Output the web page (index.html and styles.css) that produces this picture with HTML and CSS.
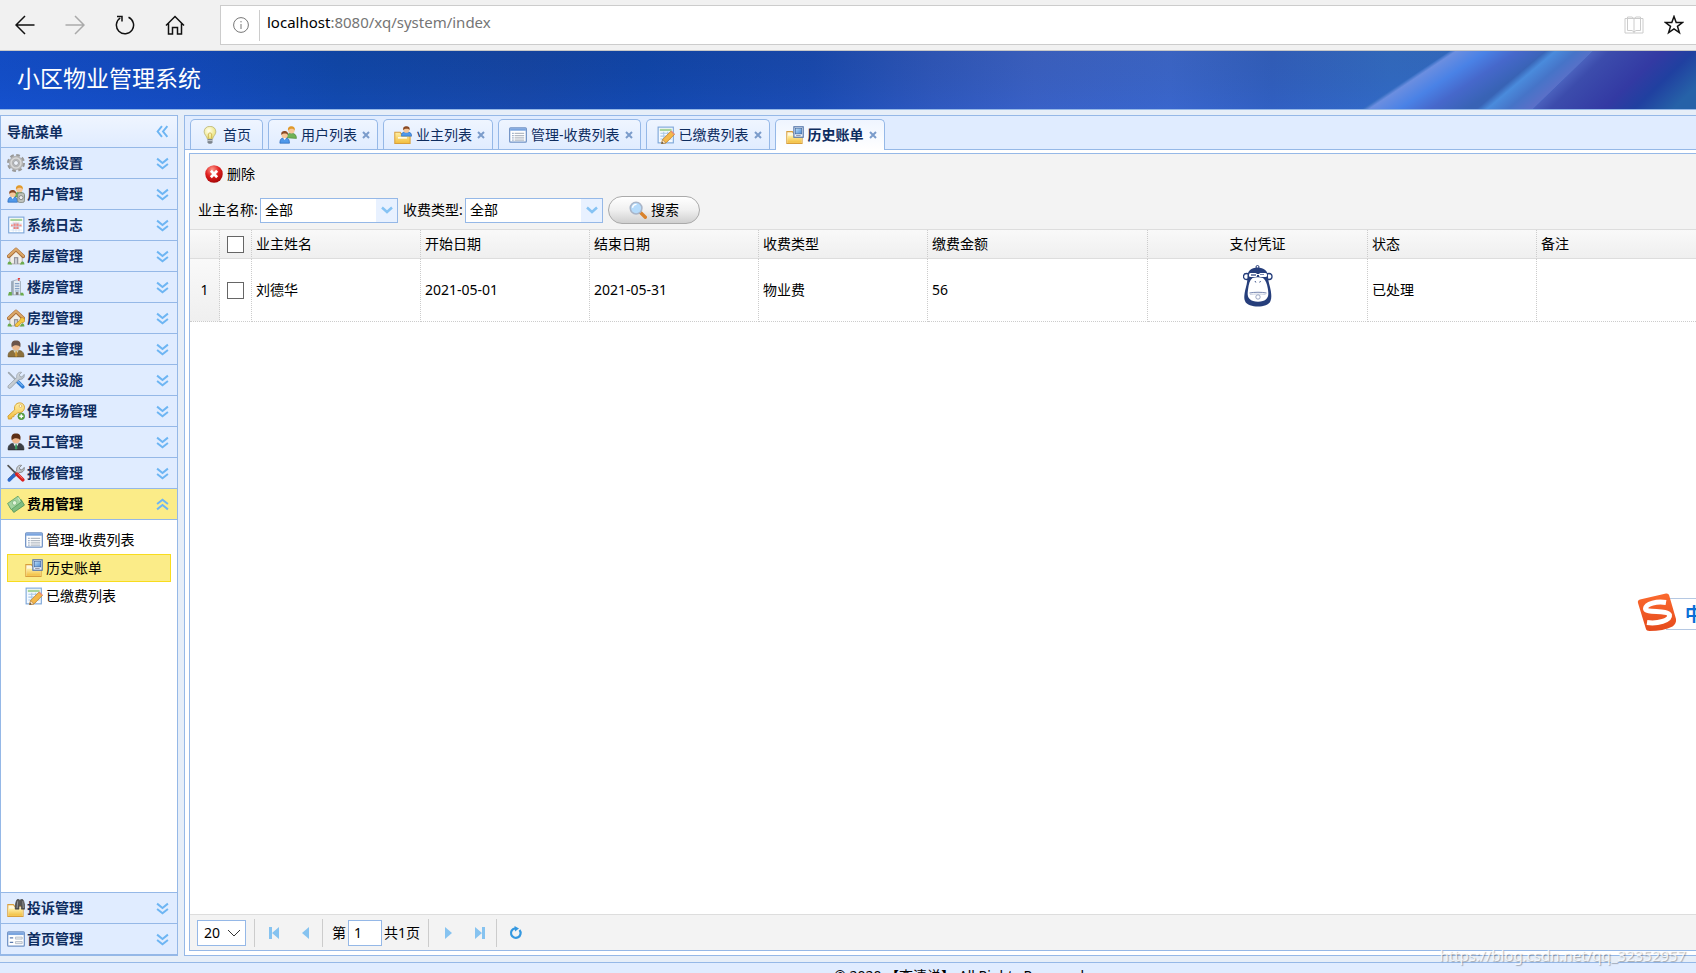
FILE: index.html
```html
<!DOCTYPE html>
<html lang="zh-CN">
<head>
<meta charset="utf-8">
<title>小区物业管理系统</title>
<link rel="stylesheet" href="styles.css">
</head>
<body>
<svg class="defs" aria-hidden="true">
  <defs>
    <linearGradient id="gold" x1="0" y1="0" x2="0" y2="1"><stop offset="0" stop-color="#fff0a8"/><stop offset="1" stop-color="#f2bd3c"/></linearGradient>
    <linearGradient id="steel" x1="0" y1="0" x2="1" y2="1"><stop offset="0" stop-color="#f2f5f7"/><stop offset="1" stop-color="#9aa4ad"/></linearGradient>
    <linearGradient id="bluescreen" x1="0" y1="0" x2="1" y2="1"><stop offset="0" stop-color="#bfe0fa"/><stop offset="1" stop-color="#4b8ad0"/></linearGradient>
    <radialGradient id="redball" cx=".4" cy=".25" r=".8"><stop offset="0" stop-color="#ff9a8c"/><stop offset=".5" stop-color="#e01f1f"/><stop offset="1" stop-color="#a00505"/></radialGradient>
    <radialGradient id="glow" cx=".4" cy=".35" r=".7"><stop offset="0" stop-color="#fffff0"/><stop offset="1" stop-color="#e9df6a"/></radialGradient>

    <symbol id="i-chev" viewBox="0 0 12 12"><path d="M1 1.500l5 4 5-4M1 6.500l5 4 5-4" fill="none" stroke="#6db5f3" stroke-width="1.800"/></symbol>
    <symbol id="i-down" viewBox="0 0 12 8"><path d="M1 1.500l5 4.500 5-4.500" fill="none" stroke="#86c3f4" stroke-width="2.500"/></symbol>

    <symbol id="i-gear" viewBox="0 0 16 16">
      <circle cx="8" cy="8" r="6.500" fill="none" stroke="#9a9a9a" stroke-width="3" stroke-dasharray="3.100 2"/>
      <circle cx="8" cy="8" r="4.400" fill="none" stroke="#b4b4b4" stroke-width="4"/>
      <circle cx="8" cy="8" r="4.400" fill="none" stroke="#d8d8d8" stroke-width="1.400"/>
      <circle cx="8" cy="8" r="2.200" fill="#eef3fb" stroke="#8d8d8d" stroke-width=".7"/>
    </symbol>
    <symbol id="i-users" viewBox="0 0 16 16">
      <path d="M7 10.500c0-3 1-4 4-4s4.500 1.500 4.500 4.500z" fill="#6fb256" stroke="#4c8a3a" stroke-width=".6"/>
      <circle cx="11" cy="3.800" r="2.900" fill="#f6c79a"/><path d="M8 4C7.600 1.200 9.200.3 11 .3s3.500 1 3 3.700c-1-1.800-4-2.200-6 0z" fill="#e0992a"/>
      <path d="M.8 15.300c0-3.600 1.200-4.800 4.200-4.800s4.300 1.200 4.300 4.800z" fill="#4f98ea" stroke="#2766b8" stroke-width=".6"/>
      <path d="M3.800 10.600L5 12.500l1.300-1.900z" fill="#fff"/>
      <circle cx="5" cy="8" r="2.800" fill="#f6c79a"/><path d="M2.100 8C1.700 5.300 3.200 4.500 5 4.500S8.400 5.500 8 8C6.600 6.500 4 6.200 2.100 8z" fill="#8a4a25"/>
    </symbol>
    <symbol id="i-useradmin" viewBox="0 0 16 16">
      <use href="#i-users"/>
      <rect x="9.500" y="7" width="6" height="8.500" rx="1.500" fill="#bfc3bd" stroke="#7c827a" stroke-width=".7"/>
      <circle cx="12.500" cy="11.200" r="1.800" fill="#eee" stroke="#777" stroke-width=".7"/>
    </symbol>
    <symbol id="i-log" viewBox="0 0 16 16">
      <rect x="1.500" y="1" width="13.500" height="14" fill="#fff" stroke="#7da7d9"/>
      <rect x="3" y="2.500" width="10.500" height="2" fill="#a8d49b"/>
      <path d="M5.500 6h5v5.500h-5z" fill="#ee7b72"/><path d="M3.500 7.500h9.500v2H3.500z" fill="#f08f87"/>
      <path d="M3 6.500h10.500M3 9.500h10.500M3 12.500h10.500M5.500 5v9M8 5v9M10.700 5v9" stroke="#c9dcf1" stroke-width=".6"/>
    </symbol>
    <symbol id="i-house" viewBox="0 0 16 16">
      <path d="M2.500 7L8 2.500 13.500 7v8h-11z" fill="#f0eee8" stroke="#9a938a" stroke-width=".6"/>
      <rect x="6.200" y="9" width="3.800" height="6" fill="#8d8d95"/><rect x="7" y="10" width="2" height="5" fill="#c9ccd4"/>
      <path d="M1.500 8.300L8 2.200l6.500 6.100" fill="none" stroke="#a86b36" stroke-width="3.200" stroke-linecap="round" stroke-linejoin="round"/>
      <path d="M1.500 8L8 2l6.500 6" fill="none" stroke="#dba868" stroke-width="1.900" stroke-linecap="round"/>
      <path d="M.5 15.500c0-2.500 1.500-3.500 3-2l1 2zM15.500 15.500c0-2.500-1.500-3.500-3-2l-1 2z" fill="#6bac4c"/>
    </symbol>
    <symbol id="i-building" viewBox="0 0 16 16">
      <path d="M4 3l5-1.500 3 1.500v12H4z" fill="#e4ebf2" stroke="#8a98a8" stroke-width=".6"/><path d="M4 3l2-.6V15H4z" fill="#9aa9ba"/>
      <path d="M7 5h4M7 7.200h4M7 9.400h4M7 11.600h4" stroke="#84a0c4" stroke-width="1"/>
      <path d="M10.500 2.500V.2M9.600.5h2" stroke="#e03f3f" stroke-width="1"/><rect x="7.800" y="12.500" width="2.400" height="2.500" fill="#777"/>
      <path d="M.8 15.500l1-3h2.500v3zM12 15.500v-2.500h2.300l.9 2.500z" fill="#6bac4c"/>
    </symbol>
    <symbol id="i-housekey" viewBox="0 0 16 16"><use href="#i-house"/><path d="M7.500 13.500l4-3.500c-.3-3 4.300-3 4.300-.2 0 2-1.500 2.500-2.800 2.200l-3.300 3.500H7.500z" fill="#f6c942" stroke="#c08a1a" stroke-width=".6"/></symbol>
    <symbol id="i-owner" viewBox="0 0 16 16">
      <path d="M1 15c-.3-4.500 2-6 7-6s7.300 1.500 7 6z" fill="#8d713c" stroke="#6a5226" stroke-width=".6"/>
      <path d="M5.500 9L8 13l2.500-4z" fill="#d9dcc8"/><path d="M7.500 10h1.200l.6 4-1.200 1-1-1z" fill="#c79331"/>
      <circle cx="8" cy="5.500" r="3.600" fill="#edbb91"/><path d="M4.200 6.500C3.200 2 5 .5 8 .5s4.800 1.500 3.800 6C10.800 4.200 6 4 4.200 6.500z" fill="#6b554b"/>
    </symbol>
    <symbol id="i-staff" viewBox="0 0 16 16">
      <path d="M1 15c-.3-4.500 2-6 7-6s7.300 1.500 7 6z" fill="#3c3f45" stroke="#26282c" stroke-width=".6"/>
      <path d="M5.500 9L8 13.500 10.500 9z" fill="#f4f6f8"/><path d="M7.500 10h1.200l.5 3.500L8 15l-1-1.500z" fill="#39975c"/>
      <circle cx="8" cy="5.500" r="3.600" fill="#f0b88c"/><path d="M4.200 6.500C3.200 2 5 .5 8 .5s4.800 1.500 3.800 6C10.800 4.200 6 4 4.200 6.500z" fill="#5c2f16"/>
    </symbol>
    <symbol id="i-tools" viewBox="0 0 16 16">
      <path d="M1.500 1.500l7 7" stroke="#9fa9b2" stroke-width="1.600" stroke-linecap="round"/>
      <path d="M9 9l5 5" stroke="#2f7ed8" stroke-width="3.200" stroke-linecap="round"/><path d="M9.300 8.700l4.500 4.500" stroke="#7fb9f3" stroke-width="1"/>
      <path d="M1 13.200l7.700-7.400C8 2.700 10.500.5 13 1.200L11 3.300l.5 1.600 1.700.4L15.300 3c.7 2.700-1.800 5-4.500 4.500L3.200 15.200c-1.400.9-3-.5-2.200-2z" fill="url(#steel)" stroke="#8a949d" stroke-width=".6"/>
    </symbol>
    <symbol id="i-repair" viewBox="0 0 16 16">
      <path d="M1 13.200l7.700-7.400C8 2.700 10.500.5 13 1.200L11 3.300l.5 1.600 1.700.4L15.300 3c.7 2.700-1.800 5-4.500 4.500L6.500 11.800z" fill="url(#steel)" stroke="#777" stroke-width=".7"/>
      <path d="M2 14.200L6.500 9.800" stroke="#2c68c9" stroke-width="3" stroke-linecap="round"/>
      <path d="M1 1.500l7 7" stroke="#555" stroke-width="1.500" stroke-linecap="round"/>
      <path d="M8.800 9l5.200 5" stroke="#d92020" stroke-width="3.200" stroke-linecap="round"/><path d="M9.500 8.800l4.300 4.200" stroke="#ff8b80" stroke-width=".8"/>
    </symbol>
    <symbol id="i-keyadd" viewBox="0 0 16 16">
      <path d="M.8 12.500l6-5.500C6 2.500 9 .5 12 .8c3.500.5 4.500 4.500 2.500 7-1.400 1.700-3.500 2-5 1.700L8 11l-1.500.3-.3 1.700-1.700.2-.5 1.800-2.700.2z" fill="url(#gold)" stroke="#d39c2b" stroke-width=".8"/>
      <circle cx="12" cy="3.600" r="1.200" fill="#fff" stroke="#c8952c" stroke-width=".5"/>
      <circle cx="12.700" cy="12.700" r="3" fill="#5aa544" stroke="#3f7f2e" stroke-width=".5"/><path d="M12.700 10.900v3.600M10.900 12.700h3.600" stroke="#fff" stroke-width="1.200"/>
    </symbol>
    <symbol id="i-money" viewBox="0 0 16 16">
      <path d="M2.500 10.500L12.500 4l3 5-9.500 6.500z" fill="#7fbd81" stroke="#4b8f55" stroke-width=".7"/>
      <path d="M.5 7.500L9.800 1l3.200 5-9.300 7z" fill="#a3d3a0" stroke="#549a5c" stroke-width=".7"/>
      <circle cx="6.700" cy="7" r="2" fill="#e2f3dc" stroke="#6fae70" stroke-width=".6"/><path d="M10 2.500l1.500 2.500" stroke="#cfeac9" stroke-width="1"/>
    </symbol>
    <symbol id="i-list" viewBox="0 0 16 16">
      <rect x=".6" y="1.600" width="14.800" height="12.800" rx=".8" fill="#fff" stroke="#6f91c5" stroke-width="1.100"/>
      <path d="M1 2h14v2.200H1z" fill="#7ba5df"/><path d="M3 6.500h1M3 8.500h1M3 10.500h1M3 12.500h1" stroke="#6f88ad"/><path d="M5 6.500h8.500M5 8.500h8.500M5 10.500h8.500M5 12.500h8.500" stroke="#b3bac4"/>
    </symbol>
    <symbol id="i-form" viewBox="0 0 16 16">
      <rect x=".6" y="1.600" width="14.800" height="12.800" rx=".8" fill="#fff" stroke="#6f91c5" stroke-width="1.100"/>
      <path d="M1 2h14v2.500H1z" fill="#7ba5df"/><path d="M2.500 7h3M2.500 11h3" stroke="#5c7cb0" stroke-width="1"/><path d="M7.500 6.300h6v1.800h-6zM7.500 10.300h6v1.800h-6z" fill="#eee" stroke="#a9b4c2" stroke-width=".7"/>
    </symbol>
    <symbol id="i-folder" viewBox="0 0 16 16"><path d="M.7 5h5l1 1.500h7.600v9H.7z" fill="#fff8dd" stroke="#d99f3c" stroke-width=".9"/><path d="M1.200 8.500h12.600V15H1.200z" fill="url(#gold)"/></symbol>
    <symbol id="i-history" viewBox="0 0 16 16">
      <use href="#i-folder"/><rect x="7" y=".7" width="8.300" height="9.300" fill="#eef4fb" stroke="#5073a8"/><rect x="8.300" y="2" width="5.700" height="5" fill="url(#bluescreen)" stroke="#41679f" stroke-width=".6"/><path d="M9 8.500h4" stroke="#889" stroke-width=".8"/>
    </symbol>
    <symbol id="i-complain" viewBox="0 0 16 16">
      <use href="#i-folder"/><path d="M7.300 9c-.3-3 .5-7 1.700-8.500h1.800l.7 1 .7-1H14C15.300 2 16 6 15.700 9h-3V6h-2v3z" fill="#555" stroke="#333" stroke-width=".5"/><path d="M9.500 2L9 8M14 2l.5 6" stroke="#a5a5a5" stroke-width=".7"/>
    </symbol>
    <symbol id="i-userfolder" viewBox="0 0 16 16">
      <path d="M.7 5.500h4.800l1 1.500h7.800v8.500H.7z" fill="url(#gold)" stroke="#d99f3c" stroke-width=".9"/>
      <path d="M6.500 9c0-2.700 1.200-3.800 4.500-3.800s4.700 1.100 4.700 3.800z" fill="#4f98ea" stroke="#2766b8" stroke-width=".5"/>
      <circle cx="11" cy="3.500" r="2.600" fill="#f6c79a"/><path d="M8.200 3.700C7.800 1 9.200.2 11 .2s3.300.8 2.900 3.500c-1-1.500-4-1.700-5.700 0z" fill="#8a4a25"/>
      <path d="M3.500 10.500h8" stroke="#fffbe6" stroke-width="1.500"/>
    </symbol>
    <symbol id="i-edit" viewBox="0 0 16 16">
      <rect x="1" y="1" width="13.500" height="14" fill="#f5faff" stroke="#7da7d9"/><rect x="2.500" y="2.500" width="10.500" height="2" fill="#a8d49b"/>
      <path d="M3 6.500h10M3 9h10M3 11.500h10M6 5v9M9.500 5v9" stroke="#a9c8e8" stroke-width=".9"/>
      <path d="M4 15.800l1-3.800 7.500-7.500 3 3L8 15z" fill="#f5b84b" stroke="#b87820" stroke-width=".6"/><path d="M4 15.800l1-3.800 3 3z" fill="#f7e0bd" stroke="#a87838" stroke-width=".5"/><path d="M4 15.800l.5-1.800 1.300 1.300z" fill="#444"/><path d="M12.500 4.500l3 3" stroke="#e68a7a" stroke-width="1.200"/>
    </symbol>
    <symbol id="i-bulb" viewBox="0 0 16 16">
      <path d="M8 .3c3.200 0 5.200 2 5.200 4.900 0 2.500-2.400 3.800-2.900 6.300H5.700C5.200 9 2.800 7.700 2.800 5.200 2.800 2.300 4.800.3 8 .3z" fill="url(#glow)" stroke="#b9b476" stroke-width=".7"/>
      <path d="M6.500 11V7l1.500-1 1.500 1v4" fill="none" stroke="#c9a93c" stroke-width=".7"/><path d="M5.800 11.500h4.400v3l-1 1.200H6.800l-1-1.200z" fill="#7c848c"/><path d="M5.800 13h4.400" stroke="#dde1e5" stroke-width=".7"/>
    </symbol>
    <symbol id="i-delete" viewBox="0 0 16 16"><circle cx="8" cy="8" r="7.800" fill="url(#redball)"/><path d="M5.200 5.200l5.600 5.600M10.800 5.200l-5.600 5.600" stroke="#fff" stroke-width="2.500"/></symbol>
    <symbol id="i-search" viewBox="0 0 16 16"><path d="M10 10l4.500 4.500" stroke="#d9822b" stroke-width="3" stroke-linecap="round"/><circle cx="6.300" cy="6.300" r="5.200" fill="#b5dbfb" stroke="#a9b5c8" stroke-width="1.400"/><path d="M3.200 6c.2-2 1.500-3 3.500-3" fill="none" stroke="#fff" stroke-width="1.300"/></symbol>
  </defs>
</svg>

<div class="browser">
  <button class="nav-btn" aria-label="后退"><svg width="20" height="20" viewBox="0 0 20 20"><path d="M19.500 10H1.500M10 1L1 10l9 9"/></svg></button>
  <button class="nav-btn nav-off" aria-label="前进"><svg width="20" height="20" viewBox="0 0 20 20"><path d="M.5 10h18M10 1l9 9-9 9"/></svg></button>
  <button class="nav-btn" aria-label="刷新"><svg width="20" height="20" viewBox="0 0 20 20"><path d="M13.500 2.300A8.600 8.600 0 1 1 5.200 3M2 1.500h5v5"/></svg></button>
  <button class="nav-btn" aria-label="主页"><svg width="20" height="20" viewBox="0 0 20 20"><path d="M1 10.500l9-9 9 9M3.500 8.500V19h4v-6.500h5V19h4V8.500"/></svg></button>
  <div class="address">
    <svg class="info" width="16" height="16" viewBox="0 0 16 16"><circle cx="8" cy="8" r="7.400"/><path d="M8 7v5M8 4v1.400"/></svg>
    <div class="url"><span class="host">localhost</span>:8080/xq/system/index</div>
    <svg class="book" width="20" height="18" viewBox="0 0 20 18"><path d="M10 2.500H1v14.500h18V2.500zM10 2.500V17M3.500 2.500V1H8l2 1.500L12 1h4.500v13.500H12L10 16l-2-1.500H3.500V2.500"/></svg>
    <svg class="star" width="20" height="20" viewBox="0 0 20 20"><path d="M10 1.500l2.200 6h6.300l-5 3.900 1.900 6.300-5.400-3.800-5.400 3.800 1.900-6.300-5-3.900h6.300z"/></svg>
  </div>
</div>

<header class="banner">
  <svg class="banner-art" viewBox="0 0 1696 58" preserveAspectRatio="none" aria-hidden="true">
    <defs>
      <linearGradient id="sky"><stop offset="0" stop-color="#134ec9"/><stop offset=".1" stop-color="#1349bb"/><stop offset=".2" stop-color="#1046a5"/><stop offset=".31" stop-color="#16449f"/><stop offset=".38" stop-color="#1145a6"/><stop offset=".48" stop-color="#1b49ab"/><stop offset=".55" stop-color="#3257b6"/><stop offset=".61" stop-color="#3f62c0"/><stop offset=".69" stop-color="#4068c7"/><stop offset=".75" stop-color="#3560ba"/><stop offset=".82" stop-color="#366dbf"/><stop offset="1" stop-color="#3668bd"/></linearGradient>
      <linearGradient id="shade" x1="0" y1="0" x2="0" y2="1"><stop offset="0" stop-color="#0c3888" stop-opacity=".1"/><stop offset="1" stop-color="#1f5ee6" stop-opacity=".2"/></linearGradient>
      <linearGradient id="ray1" gradientUnits="userSpaceOnUse" x1="1450" y1="0" x2="1482" y2="48"><stop offset="0" stop-color="#366dc2"/><stop offset=".06" stop-color="#6b8ee0"/><stop offset=".35" stop-color="#4a82e6"/><stop offset=".65" stop-color="#4668cb"/><stop offset="1" stop-color="#3863b5"/></linearGradient>
      <linearGradient id="ray2" gradientUnits="userSpaceOnUse" x1="1545" y1="0" x2="1567" y2="26"><stop offset="0" stop-color="#3863b5"/><stop offset=".2" stop-color="#4a8bdc"/><stop offset=".6" stop-color="#4674c8"/><stop offset="1" stop-color="#5a70c8"/></linearGradient>
      <linearGradient id="ray3" gradientUnits="userSpaceOnUse" x1="1593" y1="0" x2="1661" y2="70"><stop offset="0" stop-color="#4a60bc"/><stop offset=".12" stop-color="#3c4cac"/><stop offset=".5" stop-color="#333aa3"/><stop offset=".72" stop-color="#2040a0"/><stop offset="1" stop-color="#2662a8"/></linearGradient>
    </defs>
    <path fill="url(#sky)" d="M0 0h1696v58H0z"/><path fill="url(#shade)" d="M0 0h1696v58H0z"/>
    <path fill="url(#ray1)" d="M1450 0h100l-70 58h-118z"/>
    <path fill="url(#ray2)" d="M1545 0h48l-60 58h-57z"/>
    <path fill="url(#ray3)" d="M1593 0h103v58h-163z"/>
  </svg>
  <h1 class="title">小区物业管理系统</h1>
</header>

<div class="layout">
  <nav class="side">
    <div class="side-title">导航菜单<button class="fold" aria-label="收起"><svg class="chev chev-left"><use href="#i-chev"/></svg></button></div>
    <button class="acc"><svg class="ico"><use href="#i-gear"/></svg>系统设置<svg class="chev"><use href="#i-chev"/></svg></button>
    <button class="acc"><svg class="ico"><use href="#i-useradmin"/></svg>用户管理<svg class="chev"><use href="#i-chev"/></svg></button>
    <button class="acc"><svg class="ico"><use href="#i-log"/></svg>系统日志<svg class="chev"><use href="#i-chev"/></svg></button>
    <button class="acc"><svg class="ico"><use href="#i-house"/></svg>房屋管理<svg class="chev"><use href="#i-chev"/></svg></button>
    <button class="acc"><svg class="ico"><use href="#i-building"/></svg>楼房管理<svg class="chev"><use href="#i-chev"/></svg></button>
    <button class="acc"><svg class="ico"><use href="#i-housekey"/></svg>房型管理<svg class="chev"><use href="#i-chev"/></svg></button>
    <button class="acc"><svg class="ico"><use href="#i-owner"/></svg>业主管理<svg class="chev"><use href="#i-chev"/></svg></button>
    <button class="acc"><svg class="ico"><use href="#i-tools"/></svg>公共设施<svg class="chev"><use href="#i-chev"/></svg></button>
    <button class="acc"><svg class="ico"><use href="#i-keyadd"/></svg>停车场管理<svg class="chev"><use href="#i-chev"/></svg></button>
    <button class="acc"><svg class="ico"><use href="#i-staff"/></svg>员工管理<svg class="chev"><use href="#i-chev"/></svg></button>
    <button class="acc"><svg class="ico"><use href="#i-repair"/></svg>报修管理<svg class="chev"><use href="#i-chev"/></svg></button>
    <button class="acc acc-on" aria-expanded="true"><svg class="ico"><use href="#i-money"/></svg>费用管理<svg class="chev chev-up"><use href="#i-chev"/></svg></button>
    <div class="tree">
      <a class="leaf" href="#"><svg class="ico"><use href="#i-list"/></svg>管理-收费列表</a>
      <a class="leaf leaf-on" href="#"><svg class="ico"><use href="#i-history"/></svg>历史账单</a>
      <a class="leaf" href="#"><svg class="ico"><use href="#i-edit"/></svg>已缴费列表</a>
    </div>
    <button class="acc"><svg class="ico"><use href="#i-complain"/></svg>投诉管理<svg class="chev"><use href="#i-chev"/></svg></button>
    <button class="acc"><svg class="ico"><use href="#i-form"/></svg>首页管理<svg class="chev"><use href="#i-chev"/></svg></button>
  </nav>

  <main class="main">
    <div class="tabs">
      <div class="tab"><a href="#"><svg class="ico"><use href="#i-bulb"/></svg>首页</a></div>
      <div class="tab"><a href="#"><svg class="ico"><use href="#i-users"/></svg>用户列表</a><button class="close" aria-label="关闭"><svg width="8" height="8" viewBox="0 0 8 8"><path d="M1 1l6 6M7 1L1 7"/></svg></button></div>
      <div class="tab"><a href="#"><svg class="ico"><use href="#i-userfolder"/></svg>业主列表</a><button class="close" aria-label="关闭"><svg width="8" height="8" viewBox="0 0 8 8"><path d="M1 1l6 6M7 1L1 7"/></svg></button></div>
      <div class="tab"><a href="#"><svg class="ico"><use href="#i-list"/></svg>管理-收费列表</a><button class="close" aria-label="关闭"><svg width="8" height="8" viewBox="0 0 8 8"><path d="M1 1l6 6M7 1L1 7"/></svg></button></div>
      <div class="tab"><a href="#"><svg class="ico"><use href="#i-edit"/></svg>已缴费列表</a><button class="close" aria-label="关闭"><svg width="8" height="8" viewBox="0 0 8 8"><path d="M1 1l6 6M7 1L1 7"/></svg></button></div>
      <div class="tab tab-on"><a href="#"><svg class="ico"><use href="#i-history"/></svg>历史账单</a><button class="close" aria-label="关闭"><svg width="8" height="8" viewBox="0 0 8 8"><path d="M1 1l6 6M7 1L1 7"/></svg></button></div>
    </div>
    <section class="panel">
      <div class="toolbar">
        <button class="tool"><svg class="ico"><use href="#i-delete"/></svg>删除</button>
        <form class="filters">
          <label for="owner">业主名称:</label>
          <div class="combo"><select id="owner"><option>全部</option></select><span class="arrow"><svg width="12" height="8"><use href="#i-down"/></svg></span></div>
          <label for="kind">收费类型:</label>
          <div class="combo"><select id="kind"><option>全部</option></select><span class="arrow"><svg width="12" height="8"><use href="#i-down"/></svg></span></div>
          <button class="search" type="button"><svg class="ico"><use href="#i-search"/></svg>搜索</button>
        </form>
      </div>
      <div class="grid">
        <table>
          <colgroup><col class="c-num"><col class="c-check"><col class="c-mid"><col class="c-mid"><col class="c-mid"><col class="c-mid"><col class="c-wide"><col class="c-wide"><col class="c-mid"><col></colgroup>
          <thead>
            <tr><th></th><th class="box"><input type="checkbox" aria-label="全选"></th><th>业主姓名</th><th>开始日期</th><th>结束日期</th><th>收费类型</th><th>缴费金额</th><th class="center">支付凭证</th><th>状态</th><th>备注</th></tr>
          </thead>
          <tbody>
            <tr><td class="num">1</td><td class="box"><input type="checkbox" aria-label="选择第1行"></td><td>刘德华</td><td>2021-05-01</td><td>2021-05-31</td><td>物业费</td><td>56</td>
              <td class="center proof"><svg width="30" height="42" viewBox="0 0 30 42" role="img" aria-label="支付凭证">
                <circle cx="14.500" cy="2" r="1.500" fill="none" stroke="#263e7b"/>
                <circle cx="3.500" cy="11.500" r="3" fill="#fff" stroke="#263e7b" stroke-width="1.300"/><circle cx="26" cy="11.500" r="3" fill="#fff" stroke="#263e7b" stroke-width="1.300"/>
                <path d="M14.500 2.500c6.500 0 10.500 4 10.500 8.500 0 4 1 7 2 11 1.200 5 2 10.500.5 14-1.500 4-7 5.500-12.500 5.500S3.500 40 2 36c-1.500-3.500-.2-9.500 1-14 1-4 1.500-7 1.500-11 0-4.500 3.500-8.500 10-8.500z" fill="#263e7b"/>
                <path d="M9.500 13c3-1 7.500-1 10.500 0 3 2.500 4 6 4.800 10.500.8 5 1 8-1.500 10.500-1.500 1.700-4.800 2.800-8.300 2.800s-6.800-1.100-8.300-2.800c-2.500-2.500-2.200-6-1.500-10.500.7-4.500 1.300-8 4.300-10.500z" fill="#fff"/>
                <rect x="6" y="8" width="8" height="4" rx="1.500" fill="#fff"/><rect x="16" y="8" width="8" height="4" rx="1.500" fill="#fff"/><rect x="8" y="9" width="5" height="2" fill="#7d8bb0"/><rect x="17" y="9" width="4" height="1" fill="#7d8bb0"/><path d="M13 9.500h4" stroke="#fff"/>
                <path d="M12 16l.8 1.500M17.500 16l-.8 1.500" stroke="#263e7b" stroke-width=".9"/>
                <path d="M6.500 28c5-1 12-1 17 0" fill="none" stroke="#56689a" stroke-width=".8"/><path d="M7 29.500c5-.6 10-.6 15.500 0" fill="none" stroke="#aab4cc" stroke-width=".6"/>
                <circle cx="15" cy="32" r="2.200" fill="none" stroke="#8592b5" stroke-width=".8"/>
              </svg></td><td>已处理</td><td></td></tr>
          </tbody>
        </table>
      </div>
      <div class="pager">
        <div class="page-size"><select aria-label="每页条数"><option>20</option></select><svg width="14" height="8" viewBox="0 0 14 8"><path d="M1 1l6 6 6-6"/></svg></div>
        <span class="sep"></span>
        <button class="pg" aria-label="首页"><svg width="12" height="12" viewBox="0 0 12 12"><path d="M1 0h3v12H1zM11 0v12L4 6z"/></svg></button>
        <button class="pg" aria-label="上一页"><svg width="12" height="12" viewBox="0 0 12 12"><path d="M9 0v12L2 6z"/></svg></button>
        <span class="sep"></span>
        <label class="jump" for="page">第</label><input id="page" class="page-no" type="text" value="1"><span class="total">共1页</span>
        <span class="sep"></span>
        <button class="pg" aria-label="下一页"><svg width="12" height="12" viewBox="0 0 12 12"><path d="M3 0v12l7-6z"/></svg></button>
        <button class="pg" aria-label="末页"><svg width="12" height="12" viewBox="0 0 12 12"><path d="M8 0h3v12H8zM1 0v12l7-6z"/></svg></button>
        <span class="sep"></span>
        <button class="pg" aria-label="刷新"><svg width="14" height="14" viewBox="0 0 14 14"><path d="M10.500 4a4.800 4.800 0 1 1-4.500-1.700" fill="none" stroke="#3498e0" stroke-width="2.200"/><path d="M5.500 0l4.500 2.500-4 3z" fill="#3498e0"/></svg></button>
      </div>
    </section>
  </main>
</div>
<footer class="foot">© 2020 【李清说】 All Rights Reserved.</footer>

<div class="ime">
  <div class="ime-bar">中</div>
  <svg class="ime-logo" width="42" height="40" viewBox="0 0 42 40" aria-hidden="true"><defs><linearGradient id="ime" x1="0" y1="0" x2="0" y2="1"><stop offset="0" stop-color="#fb6a2e"/><stop offset="1" stop-color="#e54a1c"/></linearGradient></defs><path d="M4 7.500L30 1.500c1.500-.3 2.800.4 3.200 2L40 27c.5 3-1 6-3.500 7.500-6 3-14 4.500-23 4.500-2 0-3.200-.7-3.700-2.500L2 11c-.5-1.800.3-3.100 2-3.500z" fill="url(#ime)"/><path d="M30 10.500C21 9 10 11.500 9.500 16.500 9 21.500 32 17.500 33.500 23c1 5.500-12 9-22.500 7.500" fill="none" stroke="#fff" stroke-width="5"/></svg>
</div>
<div class="mark">https://blog.csdn.net/qq_32352957</div>
</body>
</html>
```

FILE: styles.css
```css
* { box-sizing: border-box; }

body {
  margin: 0;
  height: 100vh;
  overflow: hidden;
  display: flex;
  flex-direction: column;
  position: relative;
  background: #e6eef8;
  color: #000;
  font: 14px/20px "Noto Sans", "Noto Sans CJK SC", sans-serif;
}

button, select, input { font: inherit; color: inherit; margin: 0; }
button { border: 0; padding: 0; background: none; }
a { color: inherit; text-decoration: none; }
svg { display: block; flex: none; }

.defs { position: absolute; width: 0; height: 0; }
.ico { width: 18px; height: 18px; }

/* browser bar */
.browser {
  flex: none;
  display: flex;
  align-items: center;
  height: 51px;
  padding-left: 15px;
  background: #f1f1f1;
  border-bottom: 1px solid #c8c8c8;
}
.nav-btn { width: 20px; margin-right: 30px; }
.nav-btn path { fill: none; stroke: #111; stroke-width: 1.5; }
.nav-off path { stroke: #aaa; }
.address {
  flex: 1;
  display: flex;
  align-items: center;
  height: 40px;
  margin-left: 5px;
  padding: 0 12px;
  background: #fff;
  border: 1px solid #ccc;
  border-right: 0;
}
.info { fill: none; stroke: #777; stroke-width: 1; margin-right: 10px; }
.url {
  flex: 1;
  height: 31px;
  padding-left: 7px;
  border-left: 1px solid #ccc;
  color: #757575;
  font-size: 15px;
  line-height: 24px;
}
.host { color: #000; }
.book { fill: none; stroke: #ccc; stroke-width: 1; margin-right: 20px; }
.star { fill: none; stroke: #111; stroke-width: 1.5; }

/* banner */
.banner {
  flex: none;
  position: relative;
  height: 59px;
  border-bottom: 1px solid #95b8e7;
}
.banner-art { position: absolute; inset: 0; width: 100%; height: 100%; }
.title {
  position: relative;
  margin: 0;
  padding-left: 17px;
  color: #fff;
  font-size: 23px;
  font-weight: 400;
  line-height: 54px;
}

.layout { flex: 1; min-height: 0; display: flex; gap: 6px; padding: 5px 0 6px; }

/* navigation */
.side {
  flex: none;
  width: 178px;
  display: flex;
  flex-direction: column;
  background: #fff;
  border: 1px solid #95b8e7;
}
.side-title {
  flex: none;
  display: flex;
  align-items: center;
  justify-content: space-between;
  height: 32px;
  padding: 0 8px 0 6px;
  background: linear-gradient(#eff5ff, #e0ecff);
  border-bottom: 1px solid #95b8e7;
  color: #0e2d5f;
  font-weight: 700;
}
.acc {
  flex: none;
  display: flex;
  align-items: center;
  height: 31px;
  padding: 0 8px 0 6px;
  background: #e0ecff;
  border-bottom: 1px solid #95b8e7;
  color: #0e2d5f;
  font-weight: 700;
}
.acc .ico { margin-right: 2px; }
.acc-on { background: #fbec88; color: #000; }
.chev { width: 13px; height: 13px; margin-left: auto; }
.chev-left { transform: rotate(90deg); }
.chev-up { transform: rotate(180deg); }
.tree { flex: 1; min-height: 0; padding: 6px; border-bottom: 1px solid #95b8e7; }
.leaf {
  display: flex;
  align-items: center;
  gap: 3px;
  height: 28px;
  padding-left: 17px;
  border: 1px solid transparent;
}
.leaf-on { background: #fbec88; border-color: #f8dc1e; }

/* tabs */
.main {
  flex: 1;
  min-width: 0;
  display: flex;
  flex-direction: column;
  background: #fff;
  border: 1px solid #95b8e7;
  border-right: 0;
}
.tabs {
  flex: none;
  display: flex;
  align-items: flex-end;
  gap: 5px;
  height: 34px;
  padding-left: 5px;
  background: #e0ecff;
  border-bottom: 1px solid #95b8e7;
}
.tab {
  display: flex;
  align-items: center;
  gap: 5px;
  height: 30px;
  padding: 0 7px 0 10px;
  background: linear-gradient(#eff5ff, #e0ecff);
  border: 1px solid #95b8e7;
  border-bottom: 0;
  border-radius: 5px 5px 0 0;
  color: #0e2d5f;
}
.tab:first-child { padding-right: 11px; }
.tab a { display: flex; align-items: center; gap: 4px; }
.tab-on { height: 31px; margin-bottom: -1px; background: linear-gradient(#eff5ff, #fff); font-weight: 700; }
.close path { stroke: #7b9ccb; stroke-width: 2; }

.panel {
  flex: 1;
  min-height: 0;
  display: flex;
  flex-direction: column;
  margin: 3px 0 4px 4px;
  border: 1px solid #95b8e7;
  border-right: 0;
}

/* toolbar */
.toolbar { flex: none; height: 76px; padding: 6px 0 0 8px; background: #f3f3f3; border-bottom: 1px solid #ddd; }
.tool { display: flex; align-items: center; gap: 4px; height: 28px; margin-left: 7px; }
.filters { display: flex; align-items: center; height: 44px; }
.filters label { width: 62px; }
.combo { position: relative; width: 138px; height: 25px; margin-right: 5px; }
.combo select {
  width: 100%;
  height: 100%;
  padding: 0 26px 0 4px;
  appearance: none;
  background: #fff;
  border: 1px solid #95b8e7;
  border-radius: 0;
}
.arrow {
  position: absolute;
  inset: 1px 1px 1px auto;
  width: 21px;
  display: grid;
  place-items: center;
  background: #e8f1ff;
  pointer-events: none;
}
.search {
  display: flex;
  align-items: center;
  gap: 4px;
  height: 28px;
  padding: 0 20px;
  background: linear-gradient(#fff, #f0f0f0 50%, #cfcfcf);
  border: 1px solid #aaa;
  border-radius: 14px;
}

/* data grid */
.grid { flex: 1; min-height: 0; overflow: hidden; }
.grid table { width: 100%; table-layout: fixed; border-collapse: separate; border-spacing: 0; }
.c-num { width: 30px; }
.c-check { width: 32px; }
.c-mid { width: 169px; }
.c-wide { width: 220px; }
.grid th, .grid td {
  padding: 0 4px;
  text-align: left;
  font-weight: 400;
  border-right: 1px dotted #ccc;
}
.grid th:last-child, .grid td:last-child { border-right: 0; }
.grid th { height: 29px; background: linear-gradient(#f9f9f9, #efefef); border-bottom: 1px solid #ddd; }
.grid td { height: 63px; border-bottom: 1px dotted #ccc; }
.grid .num { text-align: center; background: linear-gradient(#f9f9f9, #efefef); }
.grid .center { text-align: center; }
.grid .box { padding: 0 7px; }
.proof svg { margin: 0 auto 8px; }
.box input {
  display: block;
  width: 17px;
  height: 17px;
  appearance: none;
  background: #fff;
  border: 1px solid #666;
}

/* pager */
.pager {
  flex: none;
  display: flex;
  align-items: center;
  height: 36px;
  padding-left: 7px;
  background: #f3f3f3;
  border-top: 1px solid #ddd;
}
.page-size { position: relative; width: 49px; height: 26px; margin-right: 5px; }
.page-size select {
  width: 100%;
  height: 100%;
  padding: 0 0 0 6px;
  appearance: none;
  background: #fff;
  border: 1px solid #95b8e7;
  border-radius: 0;
}
.page-size svg { position: absolute; right: 5px; top: 9px; fill: none; stroke: #333; pointer-events: none; }
.sep { width: 1px; height: 28px; margin: 0 3px; background: #ccc; }
.pg { display: grid; place-items: center; width: 22px; height: 24px; margin: 0 5px; fill: #86c3f0; }
.pg + .sep { margin-left: 0; }
.jump { margin-left: 6px; }
.page-no { width: 34px; height: 26px; margin: 0 2px; padding: 0 5px; background: #fff; border: 1px solid #95b8e7; }
.total { margin-right: 5px; }

/* footer */
.foot {
  flex: none;
  height: 11px;
  padding: 3px 0 0 226px;
  overflow: hidden;
  background: #e0ecff;
  border-top: 1px solid #95b8e7;
  text-align: center;
}

/* input-method bar floating over the page */
.ime { position: absolute; right: 0; top: 592px; width: 60px; height: 40px; overflow: hidden; }
.ime-bar {
  position: absolute;
  inset: 6px 0 2px 30px;
  padding-left: 19px;
  background: #fff;
  border: solid #b5c8e2;
  border-width: 1px 0;
  color: #0a6fd6;
  font-size: 18px;
  font-weight: 700;
  line-height: 30px;
  white-space: nowrap;
}
.ime-logo { position: absolute; left: 0; top: 0; }
.mark {
  position: absolute;
  right: 10px;
  bottom: 8px;
  color: rgba(255, 255, 255, .8);
  text-shadow: 1px 1px 1px rgba(0, 0, 0, .3);
  font-size: 15px;
  line-height: 20px;
}
```
